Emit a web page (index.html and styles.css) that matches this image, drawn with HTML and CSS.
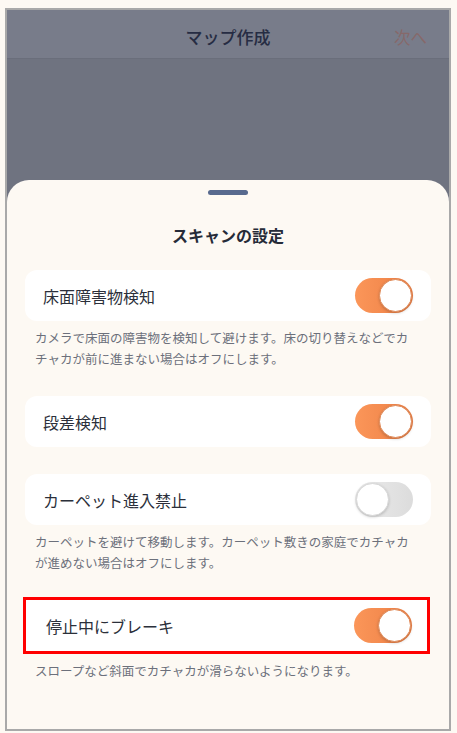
FILE: index.html
```html
<!DOCTYPE html>
<html lang="ja">
<head>
    <meta charset="UTF-8">
    <meta name="viewport" content="width=device-width, initial-scale=1.0">
    <title>マップ作成</title>
    <link rel="stylesheet" href="styles.css">
</head>
<body>
    <div class="device">
        <header class="navbar">
            <h1 class="nav-title">マップ作成</h1>
            <span class="nav-next">次へ</span>
        </header>
        <div class="backdrop"></div>

        <section class="sheet">
            <div class="handle"></div>
            <h2 class="sheet-title">スキャンの設定</h2>

            <div class="setting">
                <div class="card">
                    <span class="label">床面障害物検知</span>
                    <span class="toggle on"><span class="knob"></span></span>
                </div>
                <p class="desc">カメラで床面の障害物を検知して避けます。床の切り替えなどでカチャカが前に進まない場合はオフにします。</p>
            </div>

            <div class="setting">
                <div class="card">
                    <span class="label">段差検知</span>
                    <span class="toggle on"><span class="knob"></span></span>
                </div>
            </div>

            <div class="setting">
                <div class="card">
                    <span class="label">カーペット進入禁止</span>
                    <span class="toggle"><span class="knob"></span></span>
                </div>
                <p class="desc">カーペットを避けて移動します。カーペット敷きの家庭でカチャカが進めない場合はオフにします。</p>
            </div>

            <div class="setting">
                <div class="highlight">
                    <div class="card">
                        <span class="label">停止中にブレーキ</span>
                        <span class="toggle on"><span class="knob"></span></span>
                    </div>
                </div>
                <p class="desc">スロープなど斜面でカチャカが滑らないようになります。</p>
            </div>
        </section>
    </div>
</body>
</html>
```

FILE: styles.css
```css
body {
    margin: 0;
    background-color: #fdf9f3;
    font-family: 'Noto Sans CJK JP', 'Noto Sans', sans-serif;
    color: #262b38;
}
.device {
    margin: 8px 0 0 5px;
    width: 442px;
    height: 719px;
    border: 2px solid #a9a9a9;
    background-color: #6f7380;
    display: flex;
    flex-direction: column;
    overflow: hidden;
}
.navbar {
    height: 49px;
    border-bottom: 1px solid #6a6e7b;
    background-color: #787c8a;
    display: flex;
    align-items: center;
    justify-content: center;
    position: relative;
    padding-top: 4px;
    box-sizing: border-box;
}
.nav-title {
    margin: 0;
    font-size: 17px;
    font-weight: 500;
    color: #262c43;
}
.nav-next {
    position: absolute;
    right: 22px;
    top: 15px;
    font-size: 16.5px;
    color: #86696a;
}
.backdrop {
    height: 121px;
}
.sheet {
    flex: 1;
    background-color: #fdf9f3;
    border-radius: 22px 22px 0 0;
    padding: 10px 18px 0;
    display: flex;
    flex-direction: column;
}
.handle {
    width: 40px;
    height: 5px;
    border-radius: 3px;
    background-color: #586a8e;
    align-self: center;
}
.sheet-title {
    margin: 28px 0 23px;
    font-size: 16px;
    font-weight: 700;
    line-height: 24px;
    text-align: center;
    color: #262b38;
}
.setting {
    margin-bottom: 27px;
}
.card {
    height: 51px;
    background-color: #ffffff;
    border-radius: 12px;
    padding: 0 18px;
    display: flex;
    align-items: center;
    justify-content: space-between;
}
.label {
    font-size: 16px;
    color: #2b2f3a;
}
.desc {
    margin: 6px 0 0;
    padding: 0 14px 0 10px;
    font-size: 12.5px;
    line-height: 21px;
    color: #6c707b;
}
.highlight {
    border: 3px solid #ff0000;
    margin: -3px 1px 0 -2px;
}
.highlight .card {
    border-radius: 0;
    padding: 0 15px 0 20px;
}
.toggle {
    width: 58px;
    height: 35px;
    border-radius: 18px;
    background: linear-gradient(90deg, #ececec, #dcdcdc);
    display: flex;
    align-items: center;
    padding: 0 1px;
    box-sizing: border-box;
}
.toggle.on {
    background: linear-gradient(90deg, #fb9659, #ec7f45);
    justify-content: flex-end;
}
.knob {
    width: 33px;
    height: 33px;
    border-radius: 50%;
    background-color: #ffffff;
    box-sizing: border-box;
    border: 1px solid #d8d8d8;
    box-shadow: 0 1px 3px rgba(0, 0, 0, 0.2);
}
.toggle.on .knob {
    border-color: #e08a58;
}
```
